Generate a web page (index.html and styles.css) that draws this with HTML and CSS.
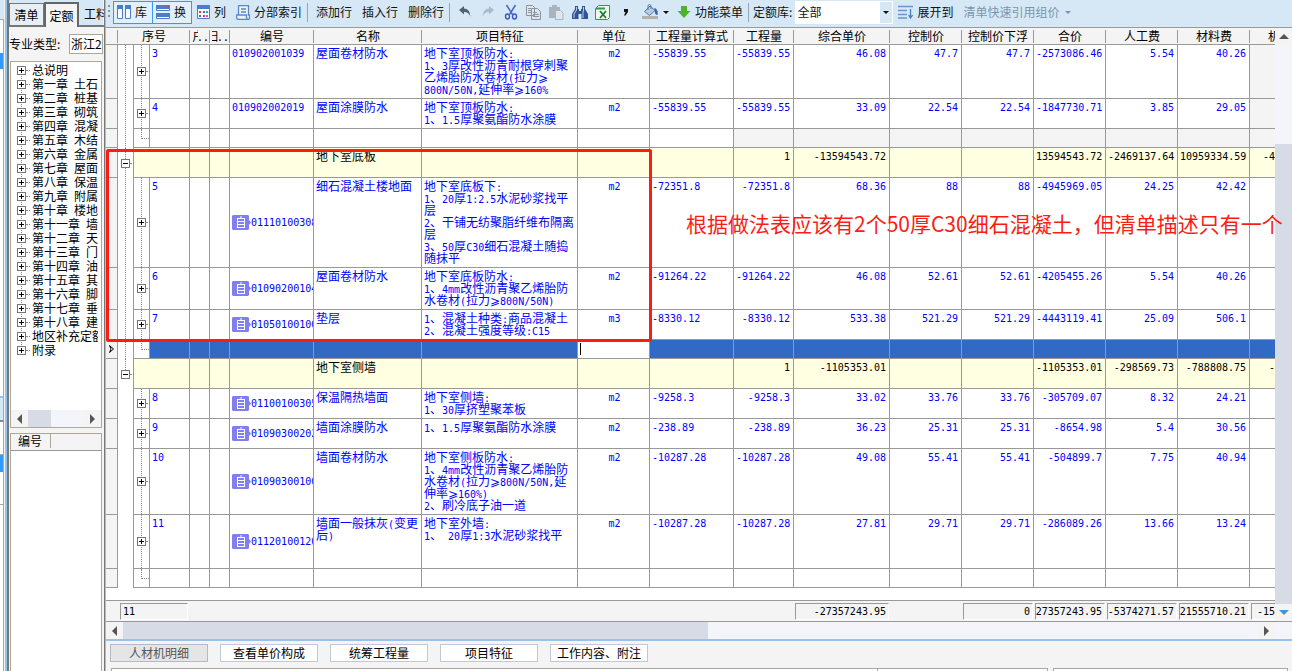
FILE: index.html
```html
<!DOCTYPE html>
<html lang="zh-CN">
<head>
<meta charset="utf-8">
<title>工程量清单</title>
<link rel="stylesheet" href="styles.css">
</head>
<body>
<svg class="defs" aria-hidden="true">
  <symbol id="tag" viewBox="0 0 19 15"><path d="M0 1l1-1h15l1 1v4l2 2.500-2 2.500v4l-1 1H1l-1-1z" fill="#7f7ff0"/><path d="M5 3.500h8M6 6.500h6M6 9.500h6M5 12.500h8M5.500 3v10M12.500 3v10M9 1v2" stroke="#fff" fill="none"/></symbol>
</svg>
<div class="app">
  <div class="edge"><i class="e-top"></i><i class="e-box"></i><i class="e-sel"></i><i class="e-rest"></i><i class="e-bar"></i><i class="e-low"></i><i class="e-sel2"></i><i class="e-low"></i><i class="e-end"></i></div>
  <aside class="side">
    <nav class="tabs"><button>清单</button><button class="on">定额</button><button class="cut">工料</button></nav>
    <div class="type"><label for="kind">专业类型:</label><select id="kind"><option>浙江2</option></select></div>
    <div class="treebox">
      <ul class="tree">
        <li><button class="exp" aria-label="展开"></button>总说明</li>
        <li><button class="exp" aria-label="展开"></button>第一章<s></s>土石</li>
        <li><button class="exp" aria-label="展开"></button>第二章<s></s>桩基</li>
        <li><button class="exp" aria-label="展开"></button>第三章<s></s>砌筑</li>
        <li><button class="exp" aria-label="展开"></button>第四章<s></s>混凝</li>
        <li><button class="exp" aria-label="展开"></button>第五章<s></s>木结</li>
        <li><button class="exp" aria-label="展开"></button>第六章<s></s>金属</li>
        <li><button class="exp" aria-label="展开"></button>第七章<s></s>屋面</li>
        <li><button class="exp" aria-label="展开"></button>第八章<s></s>保温</li>
        <li><button class="exp" aria-label="展开"></button>第九章<s></s>附属</li>
        <li><button class="exp" aria-label="展开"></button>第十章<s></s>楼地</li>
        <li><button class="exp" aria-label="展开"></button>第十一章<s></s>墙</li>
        <li><button class="exp" aria-label="展开"></button>第十二章<s></s>天</li>
        <li><button class="exp" aria-label="展开"></button>第十三章<s></s>门</li>
        <li><button class="exp" aria-label="展开"></button>第十四章<s></s>油</li>
        <li><button class="exp" aria-label="展开"></button>第十五章<s></s>其</li>
        <li><button class="exp" aria-label="展开"></button>第十六章<s></s>脚</li>
        <li><button class="exp" aria-label="展开"></button>第十七章<s></s>垂</li>
        <li><button class="exp" aria-label="展开"></button>第十八章<s></s>建</li>
        <li><button class="exp" aria-label="展开"></button>地区补充定额</li>
        <li><button class="exp" aria-label="展开"></button>附录</li>
      </ul>
      <div class="hs"><i class="al"></i><i class="thumb"></i><i class="ar"></i></div>
    </div>
    <div class="codes"><div class="codes-h"><span>编号</span></div></div>
  </aside>
  <main class="work">
    <div class="bar">
      <i class="grip"></i>
      <button class="tb on"><svg width="14" height="14"><path d="M.5.5h5v13h-5zM8.500.5h5v13h-5z" fill="#f7fbff" stroke="#4a7dcb"/><path d="M0 0h6v4H0zM8 0h6v4H8z" fill="#4a7dcb"/><path d="M4 2h1M12 2h1" stroke="#e33"/></svg>库</button>
      <button class="tb on two"><svg width="14" height="14"><path d="M.5.5h13v5H.5zM.5 8.500h13v5H.5z" fill="#f7fbff" stroke="#4a7dcb"/><path d="M0 0h14v4H0zM0 8h14v4H0z" fill="#4a7dcb"/><path d="M10 2h1M12 2h1" stroke="#e33"/></svg>换</button>
      <button class="tb"><svg width="13" height="14"><path d="M.5.5h12v13H.5z" fill="#fff" stroke="#4a7dcb"/><path d="M0 0h13v4H0z" fill="#4a7dcb"/><path d="M2 6h2v2H2z" fill="#e33"/><path d="M6 6h2v2H6zM2 10h2v2H2z" fill="#3a6fd0"/><path d="M9 6h2v2H9z" fill="#2b9"/><path d="M6 10h2v2H6z" fill="#b3c"/><path d="M9 10h2v2H9z" fill="#e63"/></svg>列</button>
      <button class="tb"><svg width="14" height="15"><path d="M2.500 10V1.500q0-1 1-1h9v9.500h1V13q0 1.500-1.500 1.500H2Q.5 14 .5 12v-2h10v2q0 2 1.500 2.500M5 4h5M5 7h5" fill="#eaf2fb" stroke="#5a86c8" stroke-width="1.300"/></svg>分部索引</button>
      <i class="sep"></i>
      <button class="tb">添加行</button><button class="tb">插入行</button><button class="tb">删除行</button>
      <i class="sep"></i>
      <button class="ic" aria-label="撤销"><svg width="14" height="14"><path d="M1 5l5-4v2.500q6 0 6.500 8.500Q11 7 6 7v2.500z" fill="#53616f"/></svg></button>
      <button class="ic" aria-label="重做"><svg width="14" height="14"><path d="M13 5L8 1v2.500Q2 3.500 1.500 12 3 7 8 7v2.500z" fill="#a9bccb"/></svg></button>
      <button class="ic" aria-label="剪切"><svg width="14" height="16"><path d="M2.500 1l6 9.500M11.500 1l-6 9.500" stroke="#4968c0" stroke-width="1.500" fill="none"/><ellipse cx="3.500" cy="12.500" rx="2" ry="2.500" fill="none" stroke="#4055c5" stroke-width="1.400"/><ellipse cx="10.500" cy="12.500" rx="2" ry="2.500" fill="none" stroke="#4055c5" stroke-width="1.400"/></svg></button>
      <button class="ic" aria-label="复制"><svg width="15" height="15"><path d="M.5.5h6l2 2v8h-8zM5.500 3.500h6l3 3v8h-9z" fill="#dfe6ec" stroke="#8a949e"/><path d="M7 7.500h4M7 9.500h6M7 11.500h6M2 3.500h3M2 5.500h3M2 7.500h3" stroke="#8a949e"/></svg></button>
      <button class="ic" aria-label="粘贴"><svg width="15" height="15"><path d="M0 2h11v11H0zM3 0h5v4H3z" fill="#a9b4bd"/><path d="M6.500 5.500h5l2.500 2.500v6.500H6.500z" fill="#dfe8ef" stroke="#a9b4bd"/></svg></button>
      <button class="ic" aria-label="查找"><svg width="16" height="14"><path d="M3 1h3v3h1v2h2V4h1V1h3v3l3 5v5H9.500V9h-3v5H0V9l3-5z" fill="#2f5597"/><path d="M4.500 2v3L2 9v4M11.500 2v3L11 8v5" stroke="#b9d0ee" fill="none"/></svg></button>
      <button class="ic" aria-label="导出"><svg width="15" height="15"><path d="M3.500.5h11v12l-2 2h-12v-11z" fill="#eef8ec" stroke="#2f9a44"/><path d="M1 3.500h9" stroke="#2f9a44" stroke-width="2"/><path d="M5 6l6 7M11 6l-6 7" stroke="#177a35" stroke-width="1.800"/></svg></button>
      <button class="ic" aria-label="逗号"><svg width="6" height="8"><path d="M1 1h4v3L2.500 7.500H1L2.500 4H1z" fill="#111"/></svg></button>
      <button class="tb split" aria-label="填充"><svg width="16" height="16"><path d="M2.500 7.500L8 2l5 4.500-5.500 5z" fill="#b5cde8" stroke="#5b7699"/><path d="M6 6V1.500q1.500-2 3 0V5" fill="none" stroke="#5b7699"/><path d="M12 4q4.500 1 3.500 7-3 0-2.500-4z" fill="#2d62b5"/><path d="M0 12h16v3H0z" fill="#b1b1ad"/></svg><i class="dn"></i></button>
      <button class="tb"><svg width="14" height="14"><path d="M4 1h6v5h3.500L7 13 .5 6H4z" fill="#4cb22f"/></svg>功能菜单</button>
      <i class="sep"></i>
      <label class="lib" for="lib">定额库:</label>
      <span class="sel"><select id="lib"><option>全部</option></select><i class="dn"></i></span>
      <button class="tb"><svg width="15" height="14"><path d="M0 1.500h15M0 5.500h9M0 9.500h9M0 13h9" stroke="#6b93cf" stroke-width="1.500"/><path d="M12.500 4v8M10.500 10l2 3 2-3" stroke="#4a7dcb" fill="none" stroke-width="1.300"/></svg>展开到</button>
      <button class="tb off">清单快速引用组价<i class="dn"></i></button>
    </div>
    <div class="gridwrap">
      <div class="gridmain">
        <table class="grid">
          <colgroup><col class="c12"><col class="c16"><col class="c16"><col class="c40"><col class="c20"><col class="c20"><col class="c84"><col class="c108"><col class="c156"><col class="c72"><col class="c84"><col class="c60"><col class="c96"><col class="c72"><col class="c72"><col class="c72"><col class="c72"><col class="c72"><col></colgroup>
          <thead><tr><th></th><th colspan="3">序号</th><th><span class="half">户</span>. .</th><th><span class="half rt">归</span>. .</th><th>编号</th><th>名称</th><th>项目特征</th><th>单位</th><th>工程量计算式</th><th>工程量</th><th>综合单价</th><th>控制价</th><th>控制价下浮</th><th>合价</th><th>人工费</th><th>材料费</th><th class="last">机</th></tr></thead>
          <tbody>
            <tr class="lock"><td></td><td class="ln"></td><td class="ln"><button class="exp" aria-label="展开"></button></td><td class="m">3</td><td></td><td></td><td class="m">010902001039</td><td>屋面卷材防水</td><td>地下室顶板防水<b>:</b><br><b>1</b>、<b>3</b>厚改性沥青耐根穿刺聚<br>乙烯胎防水卷材<b>(</b>拉力⩾<br><b>800N/50N,</b>延伸率⩾<b>160%</b></td><td>m2</td><td>-55839.55</td><td>-55839.55</td><td>46.08</td><td>47.7</td><td>47.7</td><td>-2573086.46</td><td>5.54</td><td>40.26</td><td></td></tr>
            <tr class="lock"><td></td><td class="ln"></td><td class="ln"><button class="exp" aria-label="展开"></button></td><td class="m">4</td><td></td><td></td><td class="m">010902002019</td><td>屋面涂膜防水</td><td>地下室顶板防水<b>:</b><br><b>1</b>、<b>1.5</b>厚聚氨酯防水涂膜</td><td>m2</td><td>-55839.55</td><td>-55839.55</td><td>33.09</td><td>22.54</td><td>22.54</td><td>-1847730.71</td><td>3.85</td><td>29.05</td><td></td></tr>
            <tr class="short gray"><td></td><td class="ln"></td><td><i class="hook"></i></td><td></td><td></td><td></td><td></td><td></td><td></td><td></td><td></td><td></td><td></td><td></td><td></td><td></td><td></td><td></td><td></td></tr>
            <tr class="group"><td></td><td class="ln"><button class="exp minus" aria-label="折叠"></button></td><td colspan="2"></td><td></td><td></td><td></td><td>地下室底板</td><td></td><td></td><td></td><td>1</td><td>-13594543.72</td><td></td><td></td><td>13594543.72</td><td>-2469137.64</td><td>10959334.59</td><td>-4</td></tr>
            <tr><td></td><td class="ln"></td><td class="ln"><button class="exp" aria-label="展开"></button></td><td class="m">5</td><td></td><td></td><td class="code"><svg width="19" height="15"><use href="#tag"/></svg>01110100308</td><td>细石混凝土楼地面</td><td>地下室底板下<b>:</b><br><b>1</b>、<b>20</b>厚<b>1:2.5</b>水泥砂浆找平<br>层<br><b>2</b>、干铺无纺聚脂纤维布隔离<br>层<br><b>3</b>、<b>50</b>厚<b>C30</b>细石混凝土随捣<br>随抹平</td><td>m2</td><td>-72351.8</td><td>-72351.8</td><td>68.36</td><td>88</td><td>88</td><td>-4945969.05</td><td>24.25</td><td>42.42</td><td></td></tr>
            <tr><td></td><td class="ln"></td><td class="ln"><button class="exp" aria-label="展开"></button></td><td class="m">6</td><td></td><td></td><td class="code"><svg width="19" height="15"><use href="#tag"/></svg>01090200104</td><td>屋面卷材防水</td><td>地下室底板防水<b>:</b><br><b>1</b>、<b>4mm</b>改性沥青聚乙烯胎防<br>水卷材<b>(</b>拉力⩾<b>800N/50N)</b></td><td>m2</td><td>-91264.22</td><td>-91264.22</td><td>46.08</td><td>52.61</td><td>52.61</td><td>-4205455.26</td><td>5.54</td><td>40.26</td><td></td></tr>
            <tr><td></td><td class="ln"></td><td class="ln"><button class="exp" aria-label="展开"></button></td><td class="m">7</td><td></td><td></td><td class="code"><svg width="19" height="15"><use href="#tag"/></svg>01050100100</td><td>垫层</td><td><b>1</b>、混凝土种类<b>:</b>商品混凝土<br><b>2</b>、混凝土强度等级<b>:C15</b></td><td>m3</td><td>-8330.12</td><td>-8330.12</td><td>533.38</td><td>521.29</td><td>521.29</td><td>-4443119.41</td><td>25.09</td><td>506.1</td><td></td></tr>
            <tr class="short cur"><td><svg class="mark" width="7" height="10"><path d="M1.500 1.500l4 3.500-4 3.500 1.500-3.500z" fill="#fff" stroke="#000"/></svg></td><td class="ln"></td><td><i class="hook"></i></td><td></td><td></td><td></td><td></td><td></td><td></td><td class="edit"><input aria-label="单位"><i class="caret"></i></td><td></td><td></td><td></td><td></td><td></td><td></td><td></td><td></td><td></td></tr>
            <tr class="group"><td></td><td class="ln upper"><button class="exp minus" aria-label="折叠"></button></td><td colspan="2"></td><td></td><td></td><td></td><td>地下室侧墙</td><td></td><td></td><td></td><td>1</td><td>-1105353.01</td><td></td><td></td><td>-1105353.01</td><td>-298569.73</td><td>-788808.75</td><td>-</td></tr>
            <tr><td></td><td></td><td class="ln"><button class="exp" aria-label="展开"></button></td><td class="m">8</td><td></td><td></td><td class="code"><svg width="19" height="15"><use href="#tag"/></svg>01100100305</td><td>保温隔热墙面</td><td>地下室侧墙<b>:</b><br><b>1</b>、<b>30</b>厚挤塑聚苯板</td><td>m2</td><td>-9258.3</td><td>-9258.3</td><td>33.02</td><td>33.76</td><td>33.76</td><td>-305709.07</td><td>8.32</td><td>24.21</td><td></td></tr>
            <tr><td></td><td></td><td class="ln"><button class="exp" aria-label="展开"></button></td><td class="m">9</td><td></td><td></td><td class="code"><svg width="19" height="15"><use href="#tag"/></svg>01090300202</td><td>墙面涂膜防水</td><td><b>1</b>、<b>1.5</b>厚聚氨酯防水涂膜</td><td>m2</td><td>-238.89</td><td>-238.89</td><td>36.23</td><td>25.31</td><td>25.31</td><td>-8654.98</td><td>5.4</td><td>30.56</td><td></td></tr>
            <tr><td></td><td></td><td class="ln"><button class="exp" aria-label="展开"></button></td><td class="m">10</td><td></td><td></td><td class="code"><svg width="19" height="15"><use href="#tag"/></svg>01090300100</td><td>墙面卷材防水</td><td>地下室侧板防水<b>:</b><br><b>1</b>、<b>4mm</b>改性沥青聚乙烯胎防<br>水卷材<b>(</b>拉力⩾<b>800N/50N,</b>延<br>伸率⩾<b>160%)</b><br><b>2</b>、刷冷底子油一道</td><td>m2</td><td>-10287.28</td><td>-10287.28</td><td>49.08</td><td>55.41</td><td>55.41</td><td>-504899.7</td><td>7.75</td><td>40.94</td><td></td></tr>
            <tr class="tall"><td></td><td></td><td class="ln"><button class="exp" aria-label="展开"></button></td><td class="m">11</td><td></td><td></td><td class="code"><svg width="19" height="15"><use href="#tag"/></svg>01120100120</td><td>墙面一般抹灰<b>(</b>变更<br>后<b>)</b></td><td>地下室外墙<b>:</b><br><b>1</b>、<b> 20</b>厚<b>1:3</b>水泥砂浆找平</td><td>m2</td><td>-10287.28</td><td>-10287.28</td><td>27.81</td><td>29.71</td><td>29.71</td><td>-286089.26</td><td>13.66</td><td>13.24</td><td></td></tr>
            <tr class="short"><td></td><td></td><td><i class="hook"></i></td><td></td><td></td><td></td><td></td><td></td><td></td><td></td><td></td><td></td><td></td><td></td><td></td><td></td><td></td><td></td><td></td></tr>
          </tbody>
        </table>
        <div class="blank"></div>
        <div class="sum"><i></i><span class="first">11</span><i></i><span>-27357243.95</span><i></i><span>0</span><span>-27357243.95</span><span>-5374271.57</span><span>-21555710.21</span><span class="open">-15</span></div>
      </div>
      <div class="vs"><i class="up"></i><i class="vt"></i><i class="down"></i></div>
    </div>
    <div class="hs big"><i class="al"></i><i class="thumb"></i><i class="ar"></i></div>
    <div class="btabs"><button disabled>人材机明细</button><button>查看单价构成</button><button>统筹工程量</button><button>项目特征</button><button>工作内容、附注</button></div>
    <div class="foot"><i class="f1"></i><i class="f2"></i><i class="f3"></i></div>
    <div class="redbox"></div>
    <p class="note">根据做法表应该有2个50厚C30细石混凝土，但清单描述只有一个</p>
  </main>
</div>
</body>
</html>
```

FILE: styles.css
```css
* { box-sizing: border-box; }
body { margin: 0; font: 12px/14px "Noto Sans CJK SC", sans-serif; color: #000; background: #f4f4f4; }
button, select, input { font: inherit; color: inherit; margin: 0; padding: 0; border: 0; background: none; }
i, b, s { font-style: normal; font-weight: normal; text-decoration: none; }
.defs { display: none; }
.app { display: flex; height: 100vh; overflow: hidden; }

/* strip of the neighbouring window */
.edge { width: 7px; flex: none; display: flex; flex-direction: column; border-right: 2px solid #96c3eb; background: #f4f4f4; }
.edge i { width: 4px; border-right: 1px solid #aca899; background: #fff; flex: none; }
.e-top { height: 19px; }
.edge .e-top { background: #d6e8f6; border: 0; }
.e-box { height: 34px; border-top: 1px solid #aca899; }
.e-sel { height: 16px; }
.edge .e-sel { background: #3399ff; }
.e-rest { height: 329px; border-bottom: 2px solid #96c3eb; }
.e-bar { height: 24px; }
.edge .e-bar { background: #d6e8f6; border-bottom: 2px solid #888; }
.e-low { height: 33px; border-bottom: 1px solid #aca899; }
.e-sel2 { height: 17px; }
.edge .e-sel2 { background: #3399ff; }
.edge .e-end { flex: 1; }

.side { width: 98px; flex: none; display: flex; flex-direction: column; border-left: 2px solid #777; border-right: 1px solid #777; padding-right: 1px; overflow: hidden; background: #f4f4f4; }
.tabs { display: flex; align-items: flex-end; height: 27px; background: #d6e8f6; flex: none; }
.tabs button { flex: none; width: 35px; height: 24px; border: 1px solid #777; border-bottom: 2px solid #777; background: #e6eff6; }
.tabs .on { height: 25px; background: #f4f4f4; border: 2px solid #666; border-bottom: 0; }
.tabs .cut { width: 34px; border-width: 0 0 2px; background: none; white-space: nowrap; }
.type { display: flex; align-items: center; justify-content: space-between; height: 34px; flex: none; }
.type select { width: 34px; height: 20px; appearance: none; border: 1px solid #aca899; background: #fff; padding-left: 1px; }
.treebox { margin: 0 1px; border: 1px solid #aca899; background: #fff; height: 367px; flex: none; display: flex; flex-direction: column; overflow: hidden; }
.tree { list-style: none; margin: 0 3px 0 0; padding: 1px 0 0 6px; flex: 1; overflow: hidden; background: repeating-linear-gradient(#888 0 1px, transparent 1px 2px) 10px 8px / 1px 280px no-repeat; }
.tree li { display: flex; align-items: center; height: 14px; white-space: nowrap; }
.tree .exp { margin-right: 6px; }
.tree s { width: 6px; flex: none; }
.exp { position: relative; display: block; width: 9px; height: 9px; flex: none; border: 1px solid #777; background: linear-gradient(#000, #000) center / 5px 1px no-repeat, linear-gradient(#000, #000) center / 1px 5px no-repeat, #fff; }
.exp.minus { background: linear-gradient(#000, #000) center / 5px 1px no-repeat, #fff; }
.exp::after { content: ""; position: absolute; left: 8px; top: 3px; width: 4px; border-top: 1px dotted #888; }
.hs { height: 17px; flex: none; display: flex; align-items: center; background: #f4f5fa; }
.hs .al, .hs .ar { width: 17px; align-self: stretch; background: #f4f4f4; display: grid; place-items: center; }
.al::before, .ar::before { content: ""; border: 5px solid transparent; border-width: 5px 0; }
.al::before { border-right: 5px solid #555; }
.ar::before { border-left: 5px solid #555; }
.hs .ar { margin-left: auto; }
.hs .thumb { width: 23px; align-self: stretch; background: #d6dbe5; }
.codes { flex: 1; margin: 5px 1px 0; border: 1px solid #aca899; border-bottom: 0; background: #fff; }
.codes-h { height: 17px; border-bottom: 1px solid #999; background: #f4f4f4; }
.codes-h span { display: block; width: 40px; padding-left: 7px; border-right: 1px solid #aca899; }

.work { position: relative; flex: 1; min-width: 0; display: flex; flex-direction: column; border-left: 1px solid #96c3eb; background: #f4f4f4; }
.bar { display: flex; align-items: center; height: 27px; padding: 0 0 3px 2px; background: #d6e8f6; flex: none; white-space: nowrap; overflow: hidden; color: #111; }
.grip { width: 2px; height: 15px; margin-right: 3px; background: repeating-linear-gradient(#8a99a8 0 2px, transparent 2px 5px); }
.tb { display: flex; align-items: center; gap: 4px; height: 23px; padding: 0 5px; flex: none; }
.tb.on { border: 1px solid #3399ff; width: 40px; padding: 0 3px; background: #e3f0fb; }
.tb.two { margin-left: -1px; }
.tb svg { flex: none; }
.tb.split { padding-right: 2px; }
.ic { width: 23px; height: 23px; flex: none; display: grid; place-items: center; }
.sep { width: 1px; height: 19px; margin: 0 3px 0 0; background: #8fa6b8; flex: none; }
.dn { width: 8px; display: grid; place-items: center; }
.dn::before { content: ""; border: 3px solid transparent; border-top-color: currentColor; border-bottom: 0; }
.lib { margin: 0 3px 0 1px; }
.sel { display: flex; align-items: center; width: 98px; height: 23px; background: #fff; flex: none; }
.sel select { appearance: none; flex: 1; padding-left: 2px; height: 21px; }
.sel .dn { width: 12px; height: 21px; margin-right: 1px; background: #d6e8f6; }
.off { color: #7b95ab; }
.off .dn { margin-left: 1px; }

.gridwrap { display: flex; flex: none; border-top: 1px solid #999; border-bottom: 1px solid #999; background: #fff; }
.gridmain { flex: 1; min-width: 0; overflow: hidden; }
.grid { width: 100%; table-layout: fixed; border-spacing: 0; line-height: 12px; color: #00f; }
.c12 { width: 12px; } .c16 { width: 16px; } .c20 { width: 20px; } .c40 { width: 40px; } .c60 { width: 60px; }
.c72 { width: 72px; } .c84 { width: 84px; } .c96 { width: 96px; } .c108 { width: 108px; } .c156 { width: 156px; }
th { height: 17px; padding: 0; font-weight: normal; color: #000; white-space: nowrap; overflow: hidden; border-bottom: 1px solid #999; background: linear-gradient(#999, #999) right 2px / 1px 13px no-repeat #f4f4f4; }
th.last { text-align: left; padding-left: 18px; background: #f4f4f4; }
.half { display: inline-flex; width: 6px; height: 12px; overflow: hidden; vertical-align: top; }
.half.rt { justify-content: flex-end; }
td { height: 30px; padding: 2px 0 3px 2px; vertical-align: top; border-right: 1px solid #999; border-bottom: 1px solid #999; overflow: hidden; white-space: nowrap; }
td b, .m, .code, td:nth-last-child(-n+10) { font-family: "DejaVu Sans Mono", monospace; font-size: 10px; }
td b { line-height: 0; white-space: pre; }
.m, td:nth-last-child(-n+10) { padding-top: 3px; padding-bottom: 2px; }
td:nth-last-child(10) { text-align: center; }
td:nth-last-child(-n+8) { text-align: right; padding-right: 3px; }
td:last-child { border-right: 0; padding-right: 0; }
td:first-child { background: #f4f4f4; padding: 0; }
td:nth-child(2), td:nth-child(3) { padding: 0; overflow: visible; vertical-align: middle; }
td:nth-child(2) { border-bottom: 0; }
td .exp { margin: 0 auto 0 3px; }
.ln { background: repeating-linear-gradient(#888 0 1px, transparent 1px 2px) 7px 0 / 1px 100% no-repeat; }
.ln.upper { background-size: 1px 50%; }
.hook { display: block; width: 8px; height: 10px; margin: -9px 0 0 7px; border: dotted #888; border-width: 0 0 1px 1px; }
.code { vertical-align: middle; }
.code svg { vertical-align: middle; }
.short td { height: 19px; }
.tall td { height: 54px; }
.lock td:last-child, .gray td:nth-last-child(-n+8) { background: #f4f4f4; }
.group { color: #000; }
.group td:nth-child(n+3) { background: #ffffe1; }
.cur td:nth-child(n+4) { background: #316ac5; }
.cur td.edit { background: #fff; padding: 0; position: relative; }
.edit input { display: block; width: 100%; height: 17px; outline: 0; }
.edit .caret { position: absolute; left: 2px; top: 3px; width: 1px; height: 12px; background: #000; }
.mark { display: block; margin: 4px 2px; }
.blank { height: 13px; border-bottom: 1px solid #999; }
.sum { display: grid; grid-template-columns: 13px 70px 605px 96px 72px 72px 72px 72px 72px minmax(0, 1fr); height: 20px; background: #f4f4f4; font: 10px/14px "DejaVu Sans Mono", monospace; }
.sum span { display: flex; justify-content: flex-end; align-items: center; margin: 2px 1px 1px; padding-right: 2px; border: 1px solid #fff; border-color: #999 #fff #fff #999; overflow: hidden; }
.sum .first { justify-content: flex-start; padding-left: 2px; }
.sum .open { margin-right: 0; padding: 0; border-right: 0; }
.vs { width: 17px; flex: none; display: flex; flex-direction: column; background: #f4f5fa; }
.vs .up { height: 17px; display: grid; place-items: center; background: #f4f4f4; }
.up::before { content: ""; border: 5px solid transparent; border-bottom-color: #555; border-top: 0; }
.vs .vt { flex: 1; margin-top: 99px; background: #d6dbe5; }
.vs .down { height: 17px; display: grid; place-items: center; background: #f4f4f4; }
.down::before { content: ""; border: 5px solid transparent; border-top-color: #3c96dc; border-bottom: 0; }
.big { padding-right: 17px; border-bottom: 2px solid #96c3eb; height: 19px; }
.big .thumb { width: 50%; }
.btabs { display: flex; gap: 12px; padding: 3px 4px 0; height: 27px; flex: none; }
.btabs button { width: 98px; height: 18px; border: 1px solid #c3c8d6; background: #fff; }
.btabs button:disabled { background: #e5e5e5; color: #555; border-color: #b3bac6; }
.foot { flex: 1; display: flex; padding: 0 4px 0 5px; }
.foot i { border: 1px solid #aca899; border-bottom: 0; background: #fff; }
.foot .f1 { flex: 769; border-right: 0; }
.foot .f2 { flex: 170; margin-right: 5px; }
.foot .f3 { flex: 234; }

/* review markup over the sheet */
.redbox { position: absolute; left: 0; top: 149px; width: 546px; height: 193px; border: 3px solid #fb1d14; border-radius: 2px; pointer-events: none; }
.note { position: absolute; left: 580px; top: 208px; margin: 0; font-size: 21px; line-height: 30px; color: #fb1d14; white-space: nowrap; }
```
